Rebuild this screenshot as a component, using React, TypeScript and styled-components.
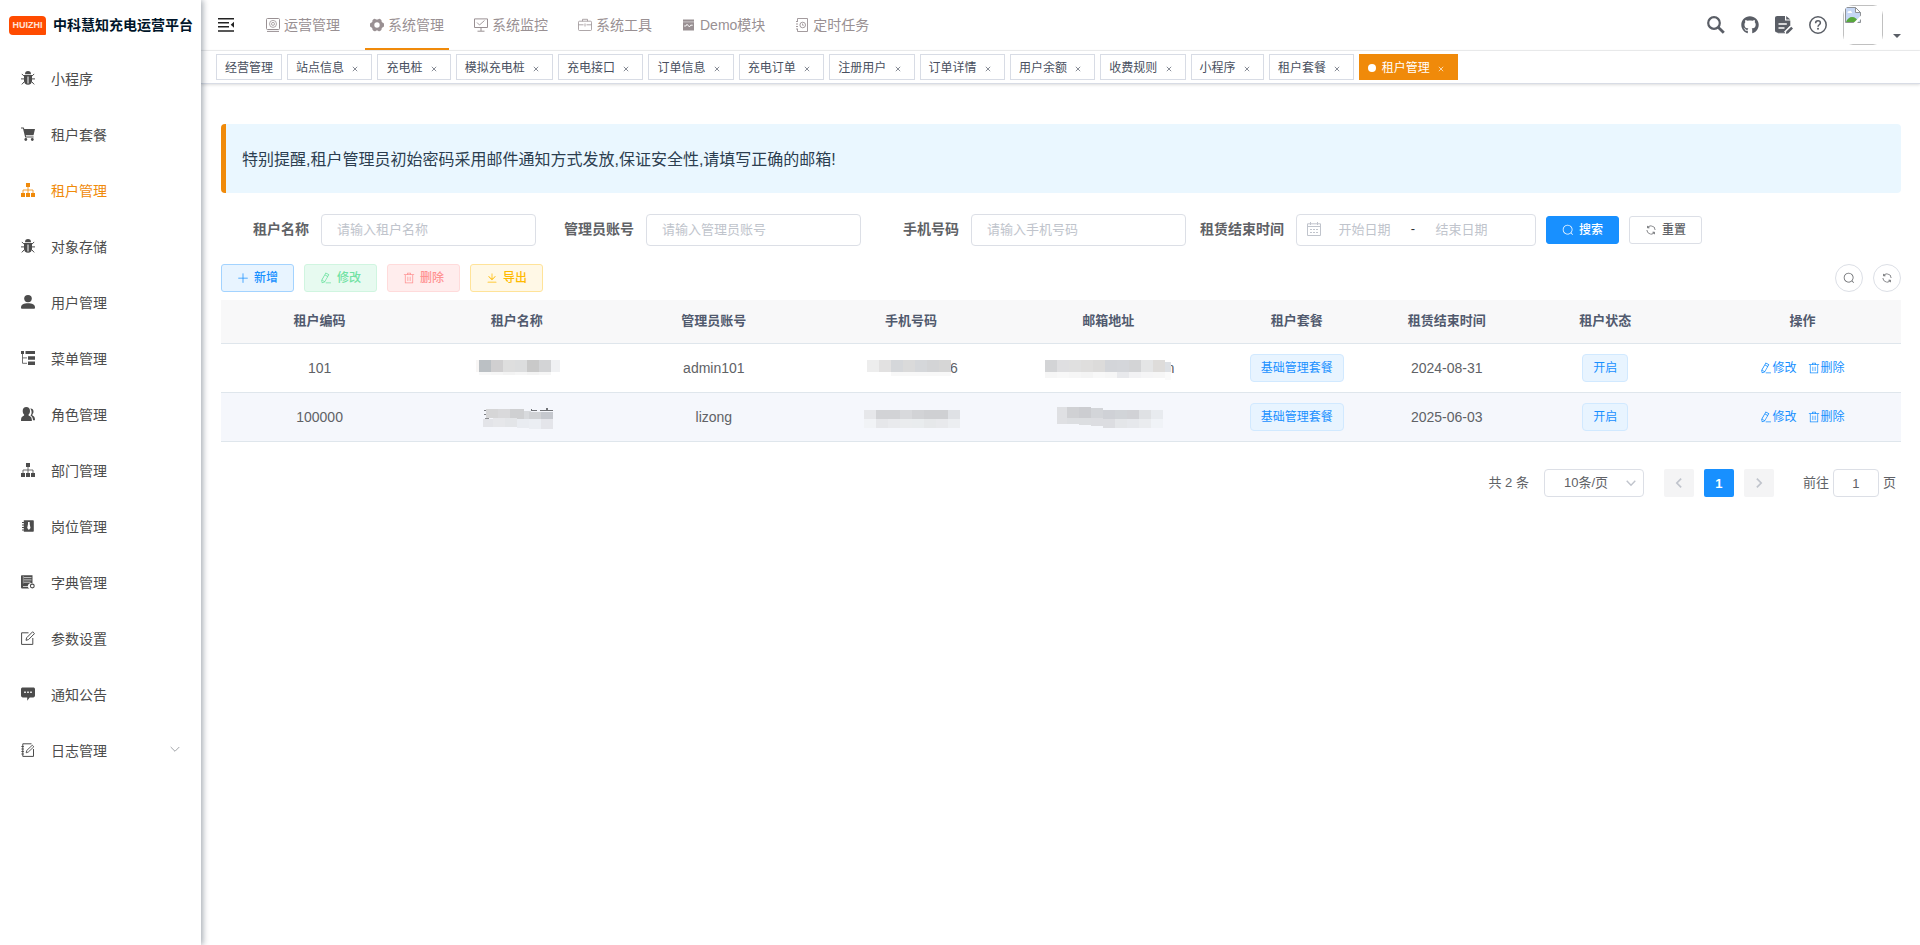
import React from "react";
import styled, { createGlobalStyle, css } from "styled-components";
import { FaGithub } from "react-icons/fa";

const ACCENT = "#f08a0a";
const BLUE = "#1890ff";

const GlobalStyle = createGlobalStyle`
  *, *::before, *::after { box-sizing: border-box; }
  body {
    margin: 0;
    background: #fff;
    color: #606266;
    font-family: "Liberation Sans", "Noto Sans CJK SC", sans-serif;
    font-size: 14px;
    line-height: 20px;
  }
  button, input, select { font-family: inherit; margin: 0; }
  a { color: inherit; text-decoration: none; }
  ul { list-style: none; margin: 0; padding: 0; }
`;

/* ---------- icons ---------- */

const Svg = styled.svg<{ $size?: number }>`
  display: block;
  flex: none;
  width: ${(p) => p.$size ?? 14}px;
  height: ${(p) => p.$size ?? 14}px;
  fill: currentColor;
`;

const stroke = { fill: "none", stroke: "currentColor" } as const;

const elPaths = {
  search:
    "m795.904 750.72 124.992 124.928a32 32 0 0 1-45.248 45.248L750.656 795.904a416 416 0 1 1 45.248-45.248zM480 832a352 352 0 1 0 0-704 352 352 0 0 0 0 704z",
  refresh:
    "M771.776 794.88A384 384 0 0 1 128 512h64a320 320 0 0 0 555.712 216.448H654.72a32 32 0 1 1 0-64h149.056a32 32 0 0 1 32 32v148.928a32 32 0 1 1-64 0v-50.56zM276.288 295.616h92.992a32 32 0 0 1 0 64H220.16a32 32 0 0 1-32-32V178.56a32 32 0 0 1 64 0v50.56A384 384 0 0 1 896.128 512h-64a320 320 0 0 0-555.776-216.384z",
  edit: "m199.04 672.64 193.984 112 224-387.968-193.92-112-224 388.032zm-23.872 60.16 32.896 148.288 144.896-45.696L175.168 732.8zM455.04 229.248l193.92 112 56.704-98.112-193.984-112-56.64 98.112zM104.32 708.8l384-665.024 304.768 175.936L409.152 884.8h.064l-248.448 78.336L104.32 708.8zm384 254.272v-64h448v64h-448z",
  remove:
    "M160 256H96a32 32 0 0 1 0-64h256V95.936a32 32 0 0 1 32-32h256a32 32 0 0 1 32 32V192h256a32 32 0 1 1 0 64h-64v672a32 32 0 0 1-32 32H192a32 32 0 0 1-32-32V256zm448-64v-64H416v64h192zM224 896h576V256H224v640zm192-128a32 32 0 0 1-32-32V416a32 32 0 0 1 64 0v320a32 32 0 0 1-32 32zm192 0a32 32 0 0 1-32-32V416a32 32 0 0 1 64 0v320a32 32 0 0 1-32 32z",
  plus: "M480 480V128a32 32 0 0 1 64 0v352h352a32 32 0 1 1 0 64H544v352a32 32 0 1 1-64 0V544H128a32 32 0 0 1 0-64h352z",
  download:
    "M160 832h704a32 32 0 1 1 0 64H160a32 32 0 1 1 0-64zm384-253.696 236.288-236.352 45.248 45.248L508.8 704 192 387.2l45.248-45.248L480 584.704V128h64v450.304z",
};

const ElIcon = ({ name, size = 12 }: { name: keyof typeof elPaths; size?: number }) => (
  <Svg $size={size} viewBox="0 0 1024 1024" aria-hidden>
    <path d={elPaths[name]} />
  </Svg>
);

const Glyph = ({ children, size }: { children: React.ReactNode; size?: number }) => (
  <Svg $size={size} viewBox="0 0 14 14" aria-hidden>
    {children}
  </Svg>
);

const icons = {
  bug: (
    <Glyph>
      <path d="M4 3.200a3 3.200 0 0 1 6 0z" />
      <path d="M3 4.100h8v5.600c0 2.300-1.700 4.100-4 4.100s-4-1.800-4-4.100z" />
      <path {...stroke} d="M3.400 5.500.8 2.900M3.400 7.900H0M3.600 10.400.8 13.400M10.600 5.500l2.600-2.600M10.600 7.900H14M10.400 10.400l2.800 3" />
      <path d="M6.500 5.400h1v7h-1z" fill="#fff" />
    </Glyph>
  ),
  cart: (
    <Glyph>
      <path d="M0 .5h2.700l.6 1.500H14l-1.500 6.300H4.800l.3 1.200h7.500v1H4.200L2 1.600H0z" />
      <circle cx="4.800" cy="12.500" r="1.400" />
      <circle cx="11.300" cy="12.500" r="1.400" />
    </Glyph>
  ),
  tree: (
    <Glyph>
      <path d="M5 0h4v4H5zM0 10h4v4H0zM5 10h4v4H5zM10 10h4v4h-4z" />
      <path {...stroke} strokeWidth=".8" d="M7 4v6M2 10V7h10v3" />
    </Glyph>
  ),
  user: (
    <Glyph>
      <ellipse cx="7" cy="3.600" rx="3.800" ry="3.600" />
      <path d="M0 12.500C0 9.500 3 8.200 7 8.200s7 1.300 7 4.300c0 1-.4 1.300-1.200 1.300H1.200C.4 13.800 0 13.500 0 12.500z" />
    </Glyph>
  ),
  treeTable: (
    <Glyph>
      <path d="M0 0h3v3H0zM4.500 0H14v3H4.500zM7 5.300h7v3.400H7zM7 10.600h7V14H7z" />
      <path {...stroke} strokeWidth=".8" d="M1.500 3v9.300H6M1.500 6.900H6" />
    </Glyph>
  ),
  peoples: (
    <Glyph>
      <path d="M5.300.1c2.300 0 3.700 1.500 3.700 3.800 0 1.700-.7 2.800-1.400 3.500-.3.800.1 1.200 1 1.600 1.600.7 2.300 1.800 2.300 5H0c0-3.200.6-4.300 2.200-5 .8-.4 1.200-.8.9-1.600C2.400 6.700 1.700 5.600 1.700 3.900 1.700 1.600 3.100.1 5.300.1z" />
      <path d="M9.300 1.500c1.900-.2 3.200 1 3.200 3.100 0 1.300-.5 2.200-1.100 2.800-.2.800.1 1.100.8 1.500 1.300.7 1.800 1.700 1.800 4.300h-2c-.2-2.400-.9-3.700-2.500-4.600.8-1 1.200-2.300 1.100-3.900-.1-1.300-.6-2.400-1.300-3.200z" />
    </Glyph>
  ),
  post: (
    <Glyph>
      <path d="M2.800 1.200H12a.8.8 0 0 1 .8.800v10a.8.8 0 0 1-.8.800H2.800z" />
      <path {...stroke} d="M1 3.500h2M1 6h2M1 8.500h2M1 11h2" />
      <path d="M7 3h1.700v2L9.500 9l-1.600 2-1.700-2L7 5z" fill="#fff" />
    </Glyph>
  ),
  dict: (
    <Glyph>
      <path d="M1 .3h10.500v8.200a3 3 0 0 0-3.200 5.100H1.500C.5 13.600 0 13 0 12V1.300C0 .7.400.3 1 .3z" />
      <path d="M2.800 2.600h7.700M2.800 4.900h7.700M2.800 7.200h6.700M2 11.500h5.500" stroke="#fff" strokeWidth=".7" />
      <path d="M2.300 1v7.500" stroke="#fff" strokeWidth=".4" />
      <circle cx="11.300" cy="11" r="1.900" {...stroke} strokeWidth="1.100" />
    </Glyph>
  ),
  edit: (
    <Glyph>
      <path {...stroke} d="M7.500 1.800H.6v11.600h11.200V7" />
      <path {...stroke} d="m5 9.300.6-2.500L11.600.8l1.900 1.800-6 6z" />
    </Glyph>
  ),
  message: (
    <Glyph>
      <path d="M1.800.4h10.400c1.100 0 1.800.7 1.800 1.700v6.500c0 1.100-.7 1.800-1.800 1.800H8.700L6.200 13.800v-3.400H1.800C.7 10.400 0 9.700 0 8.600V2.100C0 1.100.7.400 1.800.4z" />
      <path d="M3.200 4.500h1.600v1.600H3.200zM6.200 4.500h1.600v1.600H6.200zM9.200 4.500h1.600v1.600H9.200z" fill="#fff" />
    </Glyph>
  ),
  log: (
    <Glyph>
      <path {...stroke} d="M10.500.8H1.800v12.600h10.700V6M.4 3.500h2.400M.4 6h2.400M.4 8.500h2.400M.4 11h2.400" />
      <path {...stroke} strokeWidth=".9" d="m5.200 9.800.5-2.300 5.600-5.300 1.500 1.600-5.500 5.200z" />
    </Glyph>
  ),
  dashboard: (
    <Glyph>
      <rect x=".5" y=".5" width="13" height="11" rx="1" {...stroke} />
      <path {...stroke} d="M1 13.400h12" />
      <circle cx="7" cy="5.900" r="3.500" {...stroke} strokeWidth=".8" />
      <circle cx="7" cy="5.900" r="1.500" {...stroke} strokeWidth=".8" />
    </Glyph>
  ),
  system: (
    <Glyph>
      <path
        fillRule="evenodd"
        d="M4.700.7c.9 0 1 .8 2.300.8S8.400.7 9.300.7c1.200.3 2 1 2.300 1.700-.2 1 .1 1.700.8 2.200.8.500 1.300.6 1.500 1 .2 1 .2 1.900 0 2.800-.2.400-.7.500-1.500 1-.7.500-1 1.200-.8 2.200-.3.700-1.100 1.400-2.300 1.700-.9 0-1-.8-2.300-.8s-1.400.8-2.300.8c-1.200-.3-2-1-2.300-1.700.2-1-.1-1.700-.8-2.200-.8-.5-1.300-.6-1.500-1-.2-.9-.2-1.800 0-2.800.2-.4.700-.5 1.500-1 .7-.5 1-1.200.8-2.200.3-.7 1.100-1.400 2.300-1.700zM7 4.300a2.700 2.700 0 1 0 0 5.400 2.700 2.700 0 0 0 0-5.400z"
      />
    </Glyph>
  ),
  monitor: (
    <Glyph>
      <path {...stroke} d="M.5.9h13v8.600H.5zM7 9.500V13M3.500 13.200h7" />
      <path {...stroke} strokeWidth=".9" d="M3 4.500 5.500 7l5-4.500" />
    </Glyph>
  ),
  tool: (
    <Glyph>
      <rect x=".5" y="3.200" width="13" height="9.300" rx="1" {...stroke} strokeWidth=".8" />
      <path {...stroke} strokeWidth=".8" d="M4.500 3.200V1.300h5v1.900M.5 6.800h5M8.500 6.800h5M7 5.500v3" />
    </Glyph>
  ),
  demo: (
    <Glyph>
      <path d="M1 1.500h11v11H1z" />
      <path d="M1 3.900h11" stroke="#fff" strokeWidth=".5" />
      <path d="M2.200 8h1.600l1.200-1.700 2.400 2.600 1.300-1.700h2" fill="none" stroke="#fff" />
    </Glyph>
  ),
  job: (
    <Glyph>
      <path {...stroke} strokeWidth=".9" d="M2.500 3V.5h10v13h-10V11M1 3.500h2M1 6h2M1 8.500h2M1 11h2" />
      <circle cx="7.700" cy="7" r="2.800" {...stroke} strokeWidth=".9" />
      <path {...stroke} strokeWidth=".8" d="M7.500 5.500v1.700h1.400" />
    </Glyph>
  ),
};

type IconName = keyof typeof icons;

/* ---------- layout ---------- */

const Layout = styled.div`
  display: flex;
  min-height: 100vh;
`;

const Sidebar = styled.aside`
  position: relative;
  z-index: 2;
  flex: none;
  width: 201px;
  background: #fff;
  box-shadow: 2px 0 6px rgba(0, 21, 41, 0.35);
`;

const Brand = styled.a`
  display: flex;
  align-items: center;
  gap: 7px;
  height: 50px;
  padding-left: 9px;
  color: #001529;
  font-size: 14px;
  font-weight: 700;
  white-space: nowrap;
`;

const BrandBadge = styled.span`
  display: flex;
  align-items: center;
  justify-content: center;
  width: 37px;
  height: 19px;
  border-radius: 4px 4px 1px 4px;
  background: #ff4b00;
  color: #ffe3d6;
  font-size: 9px;
  line-height: 10px;
`;

const MenuLink = styled.a<{ $active?: boolean }>`
  display: flex;
  align-items: center;
  gap: 16px;
  height: 56px;
  padding: 0 20px 0 21px;
  font-size: 14px;
  color: ${(p) => (p.$active ? ACCENT : "#4c4c4c")};
`;

const MenuLabel = styled.span`
  flex: 1;
  padding-top: 2px;
`;

const MenuArrow = styled.span`
  color: #909399;
`;

const Main = styled.div`
  flex: 1;
  min-width: 0;
`;

const Header = styled.header`
  display: flex;
  align-items: center;
  height: 51px;
  padding: 0 19px 0 17px;
  border-bottom: 1px solid #f0f1f2;
`;

const IconButton = styled.button`
  display: flex;
  align-items: center;
  justify-content: center;
  padding: 0;
  border: 0;
  background: none;
  color: #5a5e66;
  cursor: pointer;
`;

const Nav = styled.nav`
  display: flex;
  flex: 1;
  gap: 20px;
  height: 50px;
  margin-left: 27px;
`;

const NavLink = styled.a<{ $active?: boolean }>`
  display: flex;
  align-items: center;
  gap: 4px;
  height: 50px;
  padding: 2px 5px 0;
  border-bottom: 2px solid ${(p) => (p.$active ? ACCENT : "transparent")};
  color: #999093;
  white-space: nowrap;
`;

const HeaderTools = styled.div`
  display: flex;
  align-items: center;
  gap: 16px;
`;

const Profile = styled.button`
  display: flex;
  align-items: flex-end;
  gap: 10px;
  padding: 0;
  border: 0;
  background: none;
  color: #5a5e66;
  cursor: pointer;
`;

const Avatar = styled.span`
  width: 40px;
  height: 40px;
  border-radius: 10px;
  overflow: hidden;
`;

const AvatarFrame = styled.span`
  display: block;
  height: 40px;
  padding: 1px;
  border: 1px solid #c0c0c0;
`;

const Caret = styled.span`
  margin-bottom: 7px;
  border: 4px solid transparent;
  border-top-color: #5a5e66;
  border-bottom: 0;
`;

const TagsBar = styled.nav`
  display: flex;
  flex-wrap: wrap;
  gap: 5px;
  min-height: 33px;
  padding: 3px 15px;
  border-bottom: 1px solid #d8dce5;
  box-shadow: 0 1px 3px rgba(0, 0, 0, 0.12), 0 0 3px rgba(0, 0, 0, 0.04);
`;

const TagLink = styled.a<{ $active?: boolean }>`
  height: 26px;
  padding: 0 8px;
  border: 1px solid ${(p) => (p.$active ? ACCENT : "#d8dce5")};
  background: ${(p) => (p.$active ? ACCENT : "#fff")};
  color: ${(p) => (p.$active ? "#fff" : "#495060")};
  font-size: 12px;
  line-height: 26px;
  white-space: nowrap;
`;

const TagDot = styled.span`
  display: inline-block;
  width: 8px;
  height: 8px;
  margin-right: 2px;
  border-radius: 50%;
  background: #fff;
`;

const TagClose = styled.span`
  display: inline-block;
  width: 16px;
  padding-left: 5px;
  opacity: 0.65;
`;

const CloseMark = styled(Svg)`
  display: inline-block;
  width: 6px;
  height: 6px;
`;

const Content = styled.main`
  padding: 40px 19px 20px 20px;
`;

const Notice = styled.p`
  margin: 0 0 20px;
  padding: 25px 16px 23px;
  border-left: 5px solid ${ACCENT};
  border-radius: 4px;
  background: #eaf7ff;
  color: #2c3e50;
  font-size: 16px;
  line-height: 21px;
`;

/* ---------- search form ---------- */

const SearchForm = styled.form`
  display: flex;
  flex-wrap: wrap;
  align-items: center;
  gap: 10px;
  min-height: 34px;
  margin-bottom: 17px;
`;

const Field = styled.div`
  display: flex;
  align-items: center;
`;

const FieldLabel = styled.label`
  width: 100px;
  padding: 0 12px 2px 0;
  font-weight: 700;
  text-align: right;
  white-space: nowrap;
`;

const boxed = css`
  border: 1px solid #dcdfe6;
  border-radius: 4px;
  background: #fff;
  color: #606266;
  font-size: 13px;
`;

const TextInput = styled.input`
  ${boxed}
  width: 215px;
  height: 32px;
  padding: 0 15px 2px;
  outline: none;
  &::placeholder { color: #c0c4cc; }
`;

const DateRange = styled.div`
  ${boxed}
  display: flex;
  align-items: center;
  width: 240px;
  height: 32px;
  padding: 0 10px 2px;
  color: #c0c4cc;
`;

const DateInput = styled.input`
  width: 87px;
  padding: 0;
  border: 0;
  outline: none;
  background: none;
  color: #606266;
  font-size: 13px;
  text-align: center;
  &::placeholder { color: #c0c4cc; }
`;

const DateDash = styled.span`
  width: 10px;
  color: #303133;
  text-align: center;
`;

const tones = {
  primary: ["#1890ff", "#1890ff", "#fff"],
  default: ["#fff", "#dcdfe6", "#606266"],
  add: ["#e8f4ff", "#a3d3ff", "#1890ff"],
  modify: ["#e7faf0", "#d0f5e0", "#71e2a3"],
  remove: ["#ffeded", "#ffdbdb", "#ff9292"],
  export: ["#fff8e6", "#ffe399", "#ffba00"],
};

const Button = styled.button<{ $tone: keyof typeof tones }>`
  display: flex;
  align-items: center;
  gap: 5px;
  height: 28px;
  padding: 0 15px;
  border: 1px solid ${(p) => tones[p.$tone][1]};
  border-radius: 3px;
  background: ${(p) => tones[p.$tone][0]};
  color: ${(p) => tones[p.$tone][2]};
  font-size: 12px;
  font-weight: 500;
  line-height: 12px;
  cursor: pointer;
`;

const Toolbar = styled.div`
  display: flex;
  gap: 10px;
  margin-bottom: 8px;
`;

const ToolbarEnd = styled.div`
  display: flex;
  gap: 10px;
  margin-left: auto;
`;

const RoundButton = styled(IconButton)`
  width: 28px;
  height: 28px;
  border: 1px solid #dcdfe6;
  border-radius: 50%;
  color: #606266;
`;

/* ---------- table ---------- */

const Table = styled.table`
  width: 100%;
  border-collapse: separate;
  border-spacing: 0;
  table-layout: fixed;
  text-align: center;
`;

const HeadCell = styled.th<{ $width?: number }>`
  height: 44px;
  width: ${(p) => (p.$width ? `${p.$width}px` : "auto")};
  padding: 0 0 2px;
  border-bottom: 1px solid #dfe6ec;
  background: #f8f8f9;
  color: #515a6e;
  font-size: 13px;
`;

const Row = styled.tr<{ $striped?: boolean }>`
  background: ${(p) => (p.$striped ? "#f5f7fc" : "#fff")};
`;

const Cell = styled.td`
  height: 49px;
  padding: 0;
  border-bottom: 1px solid #dfe6ec;
`;

const Chip = styled.span`
  display: inline-block;
  height: 28px;
  padding: 0 10px;
  border: 1px solid #d1e9ff;
  border-radius: 4px;
  background: #e8f4ff;
  color: ${BLUE};
  font-size: 12px;
  line-height: 26px;
  vertical-align: middle;
`;

const Actions = styled.div`
  display: flex;
  justify-content: center;
  gap: 12px;
`;

const TextButton = styled.button`
  display: flex;
  align-items: center;
  padding: 0;
  border: 0;
  background: none;
  color: ${BLUE};
  font-size: 12px;
  line-height: 18px;
  cursor: pointer;
`;

const Masked = styled.span`
  display: flex;
  align-items: center;
  justify-content: center;
  padding-left: 3px;
`;

const MosaicSvg = styled.svg<{ $overlap: number }>`
  position: relative;
  display: block;
  margin-right: ${(p) => -p.$overlap}px;
`;

type Block = [x: number, y: number, w: number, h: number, color: string];

const Mosaic = ({ width, blocks, overlap = 0 }: { width: number; blocks: Block[]; overlap?: number }) => (
  <MosaicSvg width={width} height={24} shapeRendering="crispEdges" $overlap={overlap} aria-hidden>
    {blocks.map(([x, y, w, h, color], i) => (
      <rect key={i} x={x} y={y} width={w} height={h} fill={color} />
    ))}
  </MosaicSvg>
);

const strip = (y: number, h: number, start: number, colors: string[]): Block[] =>
  colors.map((c, i) => [start + i * 12, y, 12, h, c]);

const name1: Block[] = [
  [0, 4, 3, 12, "#f8f6f5"],
  ...strip(4, 12, 3, ["#bbc0c4", "#d0cfd0", "#dedede", "#dcddde", "#c9c9c9", "#d3d4d6"]),
  [75, 4, 9, 12, "#f0f1f3"],
  ...strip(16, 3, 3, ["#f8f8f8", "#f6f6f6", "#f3f3f3", "#f6f6f6", "#f3f3f3", "#f6f6f6"]),
];
const phone1: Block[] = [
  ...strip(4, 12, 0, ["#ededed", "#e2e1e1", "#d5d7da", "#dadada", "#d5d7da", "#d3d4d6", "#d6d6d6"]),
  [24, 16, 60, 4, "#f8f8f8"],
];
const mail1: Block[] = [
  ...strip(4, 12, 0, ["#d3d4d6", "#dfdfe1", "#e0e0e0", "#dfdedd", "#dcdbda", "#d3d5d9", "#d4d6da", "#d3d4d6", "#e4e5e6", "#dedcda"]),
  [120, 6, 6, 10, "#dde0e4"],
  ...strip(16, 6, 0, ["#f6f6f6", "#f8f8f8", "#f6f6f6", "#f4f4f4", "#f8f8f8", "#f6f6f6", "#e8e9ec", "#f2f2f4", "#f5f5f6", "#f6f6f6"]),
  [120, 16, 6, 8, "#fafafa"],
];
const name2: Block[] = [
  [1, 5, 6, 1, "#7d7f83"], [3, 4, 1, 3, "#7d7f83"], [1, 9, 4, 1, "#7d7f83"], [2, 13, 4, 1, "#8d8f93"],
  ...strip(4, 9, 3, ["#d6d6d7", "#d9d9db"]),
  [27, 4, 14, 10, "#cfd0d2"],
  [41, 6, 7, 8, "#d8dadd"],
  [48, 4, 1, 2, "#707276"], [49, 5, 5, 1, "#707276"], [57, 5, 13, 1, "#707276"], [63, 3, 2, 2, "#707276"],
  ...strip(7, 7, 46, ["#d0d2d5", "#c5c8ce"]),
  [0, 14, 10, 8, "#e3e4e8"], [10, 13, 12, 9, "#e6e7ea"], [22, 13, 12, 9, "#e3e5e8"],
  [34, 14, 12, 9, "#e9ecf1"], [46, 14, 12, 10, "#ebeef3"], [58, 14, 12, 10, "#e4e5ea"],
];
const phone2: Block[] = [
  ...strip(5, 9, 0, ["#e6e7ea", "#d2d3d6", "#d2d3d6", "#d8d9dc", "#d2d3d6", "#cfd0d3", "#cfd0d3", "#dfe1e5"]),
  ...strip(14, 9, 0, ["#f1f3f6", "#e6e7ea", "#e9eaed", "#eaecee", "#e9ecee", "#e6e8ea", "#e8e9ec", "#eceef1"]),
];
const mail2: Block[] = [
  [0, 2, 10, 17, "#dfe0e3"],
  [10, 2, 12, 11, "#d0d1d4"], [22, 2, 12, 11, "#cccdd1"], [34, 3, 12, 11, "#d3d5d9"],
  [46, 5, 12, 9, "#cfd1d6"], [58, 5, 12, 9, "#d1d4d8"], [70, 5, 12, 9, "#d1d2d6"], [82, 5, 12, 9, "#dfe1e4"], [94, 5, 12, 9, "#e8ebef"],
  [10, 13, 12, 6, "#dcdee1"], [22, 13, 12, 7, "#dcdee1"], [34, 13, 12, 8, "#dcdde1"],
  [46, 14, 12, 9, "#dcdde1"], [58, 14, 12, 9, "#e4e6e9"], [70, 14, 12, 9, "#e6e8ec"], [82, 14, 12, 9, "#eaecef"], [94, 14, 12, 9, "#f0f3f7"],
];

/* ---------- pagination ---------- */

const Pagination = styled.div`
  display: flex;
  justify-content: flex-end;
  align-items: center;
  margin-top: 27px;
  padding-right: 5px;
  font-size: 13px;
`;

const SizeBox = styled.div`
  ${boxed}
  display: flex;
  align-items: center;
  width: 100px;
  height: 28px;
  margin: 0 20px 0 15px;
  padding-right: 7px;
  color: #c0c4cc;
`;

const SizeSelect = styled.select`
  flex: 1;
  padding: 0 0 2px 19px;
  border: 0;
  outline: none;
  appearance: none;
  background: none;
  color: #606266;
  font-size: 13px;
`;

const Pager = styled.div`
  display: flex;
  gap: 10px;
`;

const PageButton = styled.button<{ $active?: boolean }>`
  display: flex;
  align-items: center;
  justify-content: center;
  width: 30px;
  height: 28px;
  padding: 0;
  border: 0;
  border-radius: 2px;
  background: ${(p) => (p.$active ? BLUE : "#f4f4f5")};
  color: ${(p) => (p.$active ? "#fff" : "#c0c4cc")};
  font-size: 13px;
  font-weight: 700;
`;

const JumpLabel = styled.label`
  display: flex;
  align-items: center;
  gap: 4px;
  margin-left: 29px;
`;

const JumpInput = styled.input`
  ${boxed}
  width: 46px;
  height: 28px;
  padding: 0;
  text-align: center;
  outline: none;
`;

const Chevron = ({ d, size = 14, width = 1 }: { d: string; size?: number; width?: number }) => (
  <Svg $size={size} viewBox="0 0 14 14" aria-hidden>
    <path {...stroke} strokeWidth={width} d={d} />
  </Svg>
);

/* ---------- data ---------- */

const menu: [IconName, string][] = [
  ["bug", "小程序"],
  ["cart", "租户套餐"],
  ["tree", "租户管理"],
  ["bug", "对象存储"],
  ["user", "用户管理"],
  ["treeTable", "菜单管理"],
  ["peoples", "角色管理"],
  ["tree", "部门管理"],
  ["post", "岗位管理"],
  ["dict", "字典管理"],
  ["edit", "参数设置"],
  ["message", "通知公告"],
  ["log", "日志管理"],
];

const nav: [IconName, string][] = [
  ["dashboard", "运营管理"],
  ["system", "系统管理"],
  ["monitor", "系统监控"],
  ["tool", "系统工具"],
  ["demo", "Demo模块"],
  ["job", "定时任务"],
];

const tags = [
  "经营管理", "站点信息", "充电桩", "模拟充电桩", "充电接口", "订单信息", "充电订单",
  "注册用户", "订单详情", "用户余额", "收费规则", "小程序", "租户套餐", "租户管理",
];

const columns: [string, number?][] = [
  ["租户编码"], ["租户名称"], ["管理员账号"], ["手机号码"], ["邮箱地址"],
  ["租户套餐", 180], ["租赁结束时间", 120], ["租户状态"], ["操作"],
];

const tenants = [
  {
    code: "101",
    name: <Mosaic width={84} blocks={name1} />,
    account: "admin101",
    phone: <><Mosaic width={84} blocks={phone1} overlap={1} />6</>,
    mail: <><Mosaic width={126} blocks={mail1} overlap={8} />m</>,
    end: "2024-08-31",
  },
  {
    code: "100000",
    name: <Mosaic width={70} blocks={name2} />,
    account: "lizong",
    phone: <Mosaic width={96} blocks={phone2} />,
    mail: <Mosaic width={106} blocks={mail2} />,
    end: "2025-06-03",
  },
];

const fields = [
  ["tenantName", "租户名称", "请输入租户名称"],
  ["account", "管理员账号", "请输入管理员账号"],
  ["phone", "手机号码", "请输入手机号码"],
];

export default function App() {
  return (
    <Layout>
      <GlobalStyle />
      <Sidebar>
        <Brand href="#">
          <BrandBadge>HUIZHI</BrandBadge>
          中科慧知充电运营平台
        </Brand>
        <ul>
          {menu.map(([icon, label]) => (
            <li key={label}>
              <MenuLink href="#" $active={label === "租户管理"}>
                {icons[icon]}
                <MenuLabel>{label}</MenuLabel>
                {icon === "log" && (
                  <MenuArrow>
                    <Chevron size={12} d="M2 3.500 7 8.500 12 3.500" />
                  </MenuArrow>
                )}
              </MenuLink>
            </li>
          ))}
        </ul>
      </Sidebar>

      <Main>
        <Header>
          <IconButton aria-label="收起菜单">
            <Svg $size={16} viewBox="0 0 16 16" aria-hidden>
              <path d="M0 1h16v1.500H0zM0 5h11v1.500H0zM0 9h11v1.500H0zM0 13.300h16v1.500H0zM16 4.800v6L12.700 7.800z" fill="#222" />
            </Svg>
          </IconButton>
          <Nav>
            {nav.map(([icon, label]) => (
              <NavLink key={label} href="#" $active={label === "系统管理"}>
                {icons[icon]}
                {label}
              </NavLink>
            ))}
          </Nav>
          <HeaderTools>
            <IconButton aria-label="搜索">
              <Svg $size={18} viewBox="0 0 18 18" aria-hidden>
                <circle cx="7" cy="7" r="5.800" {...stroke} strokeWidth="2.200" />
                <path {...stroke} strokeWidth="2.800" d="m11.200 11.200 5.600 5.600" />
              </Svg>
            </IconButton>
            <IconButton aria-label="源码地址">
              <FaGithub size={18} />
            </IconButton>
            <IconButton aria-label="文档地址">
              <Svg $size={18} viewBox="0 0 18 18" aria-hidden>
                <path d="M2.200 0H10v4.500h5.300v5.200L9 16.500H2.200C.8 16.500 0 15.700 0 14.300V2.200C0 .8.800 0 2.200 0zM11.200 0l4.100 3.400h-4.100z" />
                <path d="M3.500 8h8.300M3.500 12h6" stroke="#fff" strokeWidth="1.400" />
                <path d="M9.500 17.800v-2.600l5.500-5.400 2.500 2.400-5.500 5.600z" fill="#fff" />
                <path d="m10.800 17.800.5-2.300 4.900-4.700 1.800 1.700-5 4.900zM2 16.300h8v1H3z" />
              </Svg>
            </IconButton>
            <IconButton aria-label="帮助">
              <Svg $size={18} viewBox="0 0 18 18" aria-hidden>
                <circle cx="9" cy="9" r="8.200" {...stroke} strokeWidth="1.500" />
                <path {...stroke} strokeWidth="1.500" d="M6.600 7.200C6.600 5.700 7.600 4.800 9 4.800s2.400.9 2.400 2.200c0 1.700-2.400 1.900-2.400 3.700" />
                <circle cx="9" cy="12.800" r="1" />
              </Svg>
            </IconButton>
            <Profile aria-label="个人中心">
              <Avatar>
                <AvatarFrame>
                  <Svg $size={16} viewBox="0 0 16 16" aria-hidden>
                    <path d="M.5.5h10l5 5v10H.5z" fill="#c6d7f5" stroke="#8f9296" />
                    <path d="M10.500.5v5h5z" fill="#fff" stroke="#8f9296" />
                    <path d="M2.500 5.500c0-1.200 1-1.500 1.600-1.200.6-1 2.400-.6 2.400.6.900 0 .9 1.100.3 1.100H3c-.3 0-.5-.2-.5-.5z" fill="#fff" />
                    <path d="M1 15c1-3 3.500-5 6-5 3 0 5.500 2 6.500 5z" fill="#57a83c" />
                    <path d="M8.500 16 16 8.500V12l-4 4z" fill="#fff" />
                  </Svg>
                </AvatarFrame>
              </Avatar>
              <Caret />
            </Profile>
          </HeaderTools>
        </Header>

        <TagsBar>
          {tags.map((tag, i) => {
            const active = i === tags.length - 1;
            return (
              <TagLink key={tag} href="#" $active={active}>
                {active && <><TagDot />{" "}</>}
                {tag}
                {i > 0 && (
                  <>
                    {" "}
                    <TagClose>
                      <CloseMark viewBox="0 0 6 6" aria-hidden>
                        <path {...stroke} d="m.8.8 4.400 4.400M5.200.8.800 5.200" />
                      </CloseMark>
                    </TagClose>
                  </>
                )}
              </TagLink>
            );
          })}
        </TagsBar>

        <Content>
          <Notice>特别提醒,租户管理员初始密码采用邮件通知方式发放,保证安全性,请填写正确的邮箱!</Notice>

          <SearchForm onSubmit={(e) => e.preventDefault()}>
            {fields.map(([id, label, placeholder]) => (
              <Field key={id}>
                <FieldLabel htmlFor={id}>{label}</FieldLabel>
                <TextInput id={id} placeholder={placeholder} />
              </Field>
            ))}
            <Field>
              <FieldLabel htmlFor="startDate">租赁结束时间</FieldLabel>
              <DateRange>
                <Svg $size={14} viewBox="0 0 14 14" aria-hidden>
                  <path {...stroke} d="M.5 1.800h13v11.700H.5zM.5 4.500h13M3.500 0v3M10.500 0v3" />
                  <path {...stroke} strokeDasharray="2 1" d="M3 7.500h8M3 10.500h8" />
                </Svg>
                <DateInput id="startDate" placeholder="开始日期" />
                <DateDash>-</DateDash>
                <DateInput aria-label="结束日期" placeholder="结束日期" />
              </DateRange>
            </Field>
            <Button type="submit" $tone="primary"><ElIcon name="search" />搜索</Button>
            <Button type="reset" $tone="default"><ElIcon name="refresh" />重置</Button>
          </SearchForm>

          <Toolbar>
            <Button $tone="add"><ElIcon name="plus" />新增</Button>
            <Button $tone="modify" disabled><ElIcon name="edit" />修改</Button>
            <Button $tone="remove" disabled><ElIcon name="remove" />删除</Button>
            <Button $tone="export"><ElIcon name="download" />导出</Button>
            <ToolbarEnd>
              <RoundButton aria-label="隐藏搜索"><ElIcon name="search" /></RoundButton>
              <RoundButton aria-label="刷新"><ElIcon name="refresh" /></RoundButton>
            </ToolbarEnd>
          </Toolbar>

          <Table>
            <thead>
              <tr>
                {columns.map(([title, width]) => (
                  <HeadCell key={title} $width={width}>{title}</HeadCell>
                ))}
              </tr>
            </thead>
            <tbody>
              {tenants.map((t, i) => (
                <Row key={t.code} $striped={i % 2 === 1}>
                  <Cell>{t.code}</Cell>
                  <Cell><Masked>{t.name}</Masked></Cell>
                  <Cell>{t.account}</Cell>
                  <Cell><Masked>{t.phone}</Masked></Cell>
                  <Cell><Masked>{t.mail}</Masked></Cell>
                  <Cell><Chip>基础管理套餐</Chip></Cell>
                  <Cell>{t.end}</Cell>
                  <Cell><Chip>开启</Chip></Cell>
                  <Cell>
                    <Actions>
                      <TextButton><ElIcon name="edit" />修改</TextButton>
                      <TextButton><ElIcon name="remove" />删除</TextButton>
                    </Actions>
                  </Cell>
                </Row>
              ))}
            </tbody>
          </Table>

          <Pagination>
            <span>共 2 条</span>
            <SizeBox>
              <SizeSelect aria-label="每页条数" defaultValue="10">
                <option value="10">10条/页</option>
                <option value="20">20条/页</option>
              </SizeSelect>
              <Chevron size={10} d="M1 4l6 6 6-6" width={2} />
            </SizeBox>
            <Pager>
              <PageButton aria-label="上一页" disabled><Chevron size={12} width={2} d="M9.500 2l-5 5 5 5" /></PageButton>
              <PageButton $active>1</PageButton>
              <PageButton aria-label="下一页" disabled><Chevron size={12} width={2} d="M4.500 2l5 5-5 5" /></PageButton>
            </Pager>
            <JumpLabel>
              前往
              <JumpInput defaultValue="1" />
              页
            </JumpLabel>
          </Pagination>
        </Content>
      </Main>
    </Layout>
  );
}
